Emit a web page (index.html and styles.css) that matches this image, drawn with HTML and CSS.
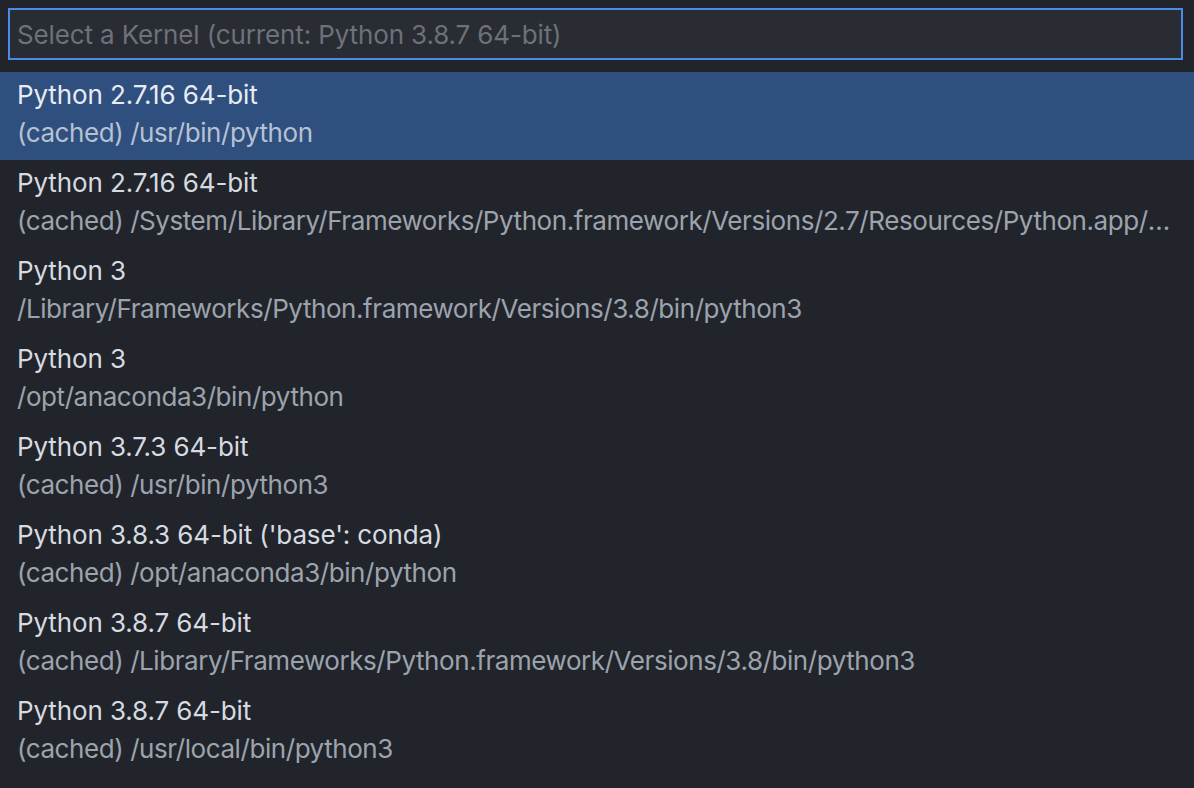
FILE: index.html
```html
<!DOCTYPE html>
<html>
<head>
<meta charset="utf-8">
<link rel="stylesheet" href="styles.css">
</head>
<body>
<div class="picker">
  <div class="input-wrap">
    <div class="input">Select a Kernel (current: Python 3.8.7 64-bit)</div>
  </div>
  <ul class="list">
    <li class="item selected"><div class="label">Python 2.7.16 64-bit</div><div class="detail">(cached) /usr/bin/python</div></li>
    <li class="item"><div class="label">Python 2.7.16 64-bit</div><div class="detail">(cached) /System/Library/Frameworks/Python.framework/Versions/2.7/Resources/Python.app/Contents/MacOS/Python</div></li>
    <li class="item"><div class="label">Python 3</div><div class="detail">/Library/Frameworks/Python.framework/Versions/3.8/bin/python3</div></li>
    <li class="item"><div class="label">Python 3</div><div class="detail">/opt/anaconda3/bin/python</div></li>
    <li class="item"><div class="label">Python 3.7.3 64-bit</div><div class="detail">(cached) /usr/bin/python3</div></li>
    <li class="item"><div class="label">Python 3.8.3 64-bit ('base': conda)</div><div class="detail">(cached) /opt/anaconda3/bin/python</div></li>
    <li class="item"><div class="label">Python 3.8.7 64-bit</div><div class="detail">(cached) /Library/Frameworks/Python.framework/Versions/3.8/bin/python3</div></li>
    <li class="item"><div class="label">Python 3.8.7 64-bit</div><div class="detail">(cached) /usr/local/bin/python3</div></li>
  </ul>
</div>
</body>
</html>
```
FILE: styles.css
```css
html, body {
  margin: 0;
  padding: 0;
  background: #21252b;
  height: 100%;
  overflow: hidden;
}
.picker {
  font-family: Inter, "Noto Sans", sans-serif;
  font-size: 26px;
  color: #d7dae0;
}
.input-wrap {
  padding: 8px 11px 12px 8px;
}
.input {
  box-sizing: content-box;
  border: 2px solid #4a8be6;
  background: #292c33;
  color: #6c717b;
  padding: 1px 8px 0 7px;
  height: 47px;
  line-height: 48px;
  letter-spacing: -0.13px;
}
.list {
  list-style: none;
  margin: 0;
  padding: 0;
}
.item {
  height: 88px;
  box-sizing: border-box;
  padding: 4px 20px 8px 17px;
}
.item .label,
.item .detail {
  line-height: 38px;
  white-space: nowrap;
  overflow: hidden;
  text-overflow: ellipsis;
}
.item .label {
  color: #d7dae0;
  letter-spacing: -0.12px;
}
.item .detail {
  color: #9da3ad;
  letter-spacing: -0.43px;
}
.item.selected {
  background: #2f4f7e;
}
.item.selected .label {
  color: #e8ecf2;
}
.item.selected .detail {
  color: #b6c1d3;
}
```
